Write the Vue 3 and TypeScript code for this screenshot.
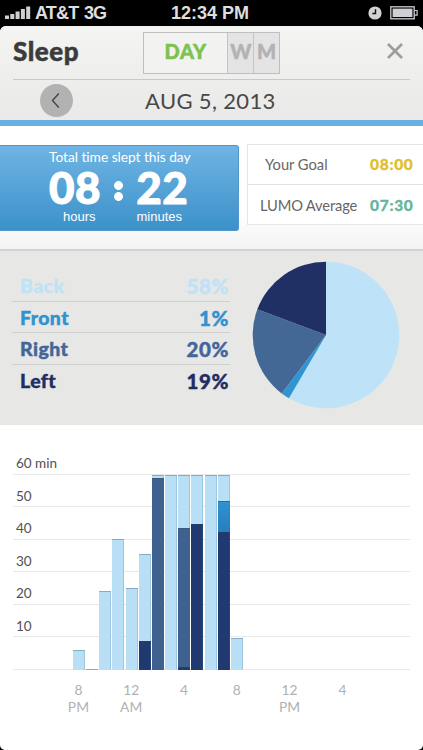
<script setup lang="ts">
import { ref } from 'vue'

interface Position {
  name: string
  percent: number
  from: number
  to: number
}

interface Segment {
  kind: string
  height: number
}

const period = ref('DAY')

const positions: Position[] = [
  { name: 'Back', percent: 58, from: 0, to: 210.4 },
  { name: 'Front', percent: 1, from: 210.4, to: 217.2 },
  { name: 'Right', percent: 20, from: 217.2, to: 290.5 },
  { name: 'Left', percent: 19, from: 290.5, to: 360 }
]

// one entry per hour, segments listed from the top down, heights in px
const hours: Segment[][] = [
  [{ kind: 'back', height: 20 }],
  [{ kind: 'back', height: 1 }],
  [{ kind: 'back', height: 79 }],
  [{ kind: 'back', height: 131 }],
  [{ kind: 'back', height: 82 }],
  [{ kind: 'back', height: 87 }, { kind: 'left', height: 29 }],
  [{ kind: 'back', height: 3 }, { kind: 'right', height: 192 }],
  [{ kind: 'back', height: 195 }],
  [{ kind: 'back', height: 53 }, { kind: 'right', height: 139 }, { kind: 'left', height: 3 }],
  [{ kind: 'back', height: 49 }, { kind: 'left', height: 146 }],
  [{ kind: 'back', height: 195 }],
  [{ kind: 'back', height: 26 }, { kind: 'front', height: 31 }, { kind: 'left', height: 138 }],
  [{ kind: 'back', height: 32 }]
]

const scale = ['60 min', '50', '40', '30', '20', '10']

const ticks = [
  { hour: '8', half: 'PM' },
  { hour: '12', half: 'AM' },
  { hour: '4', half: '' },
  { hour: '8', half: '' },
  { hour: '12', half: 'PM' },
  { hour: '4', half: '' }
]

function point (deg: number) {
  const a = deg * Math.PI / 180
  return `${74 + 73.3 * Math.sin(a)} ${74 - 73.3 * Math.cos(a)}`
}

function slice (p: Position) {
  const large = p.to - p.from > 180 ? 1 : 0
  return `M74 74 L${point(p.from)} A73.3 73.3 0 ${large} 1 ${point(p.to)} Z`
}
</script>

<template>
  <div class="phone">
    <div class="status">
      <svg class="signal" width="26" height="14" viewBox="0 0 26 14">
        <path d="M0 9.500h4V13H0zM5.300 8h4v5h-4zM10.600 5.500h4V13h-4zM15.900 3h4v10h-4zM21.200 0.500h4V13h-4z" fill="#d0d0d0" />
      </svg>
      <span class="carrier">AT&amp;T</span>
      <span class="network">3G</span>
      <span class="clock">12:34 PM</span>
      <svg class="alarm" width="14" height="14" viewBox="0 0 14 14">
        <circle cx="7" cy="7" r="6.600" fill="#d2d2d2" />
        <path d="M7.500 3.300V7.500H4.300" fill="none" stroke="#111" stroke-width="1.400" />
      </svg>
      <svg class="battery" width="28" height="14" viewBox="0 0 28 14">
        <rect x="0.800" y="0.800" width="23.400" height="12" fill="none" stroke="#cfcfcf" stroke-width="1.300" />
        <rect x="2.600" y="2.600" width="19.800" height="8.400" fill="#d2cfd4" />
        <path d="M24.500 4.500h2.600v4.600h-2.600" fill="none" stroke="#cfcfcf" stroke-width="1.200" />
      </svg>
    </div>

    <div class="screen">
      <header>
        <div class="title-row">
          <h1>Sleep</h1>
          <div class="tabs">
            <button class="day" :class="{ active: period === 'DAY' }" @click="period = 'DAY'">DAY</button>
            <button :class="{ active: period === 'W' }" @click="period = 'W'">W</button>
            <button :class="{ active: period === 'M' }" @click="period = 'M'">M</button>
          </div>
          <svg class="close" width="18" height="18" viewBox="0 0 18 18">
            <path d="M2 2L16 16M16 2L2 16" stroke="#9d9d9d" stroke-width="2.700" />
          </svg>
        </div>
        <div class="date-row">
          <button class="prev">
            <svg width="33" height="33" viewBox="0 0 33 33">
              <path d="M18.800 9.500L12.500 16.500L18.800 23.500" fill="none" stroke="#444" stroke-width="1.400" />
            </svg>
          </button>
          <span class="date">AUG 5, 2013</span>
        </div>
      </header>

      <section class="summary">
        <div class="total">
          <div class="caption">Total time slept this day</div>
          <div class="time"><span>08</span><i class="colon"></i><span>22</span></div>
          <div class="units"><span>hours</span><span>minutes</span></div>
        </div>
        <div class="compare">
          <div class="row"><span class="goal-label">Your Goal</span><b class="goal">08:00</b></div>
          <div class="row"><span class="average-label">LUMO Average</span><b class="average">07:30</b></div>
        </div>
      </section>

      <section class="positions">
        <div class="list">
          <div v-for="p in positions" :key="p.name" class="position" :class="p.name.toLowerCase()">
            <span>{{ p.name }}</span>
            <span class="percent">{{ p.percent }}%</span>
          </div>
        </div>
        <svg class="pie" width="148" height="148" viewBox="0 0 148 148">
          <path v-for="p in positions" :key="p.name" :d="slice(p)" :class="p.name.toLowerCase()" />
        </svg>
      </section>

      <section class="chart">
        <div class="plot">
          <div class="scale">
            <div v-for="s in scale" :key="s">{{ s }}</div>
            <div></div>
          </div>
          <div class="bars">
            <div v-for="(segments, i) in hours" :key="i" class="bar">
              <div
                v-for="s in segments"
                :key="s.kind"
                class="segment"
                :class="s.kind"
                :style="{ height: s.height + 'px' }"
              ></div>
            </div>
          </div>
        </div>
        <div class="ticks">
          <div v-for="(t, i) in ticks" :key="i">{{ t.hour }}<br />{{ t.half }}</div>
        </div>
      </section>
    </div>
  </div>
</template>

<style>
body {
  margin: 0;
  background: #000;
}
</style>

<style scoped>
.phone {
  width: 423px;
  height: 750px;
  background: #000;
  font-family: Lato, "Liberation Sans", sans-serif;
  font-variant-ligatures: none;
  overflow: hidden;
}

.phone * {
  box-sizing: border-box;
}

button {
  padding: 0;
  border: 0;
  font-family: inherit;
}

.status {
  display: flex;
  align-items: center;
  height: 26px;
  color: #dedede;
  font: bold 18px/26px "Liberation Sans", sans-serif;
  white-space: nowrap;
}

.signal {
  margin-left: 5px;
}

.carrier {
  width: 49px;
  margin-left: 4px;
  letter-spacing: -0.8px;
}

.network {
  width: 30px;
  letter-spacing: -1px;
}

.clock {
  width: 82px;
  margin-left: 57px;
}

.alarm {
  margin-left: 115px;
}

.battery {
  margin-left: 8px;
}

.screen {
  height: 724px;
  background: #fff;
  border-radius: 6px 6px 5px 5px;
  overflow: hidden;
}

header {
  height: 100px;
  padding: 0 13px;
  background: linear-gradient(#f4f4f2, #e9e9e8);
  border-bottom: 6px solid #6aafdf;
}

.title-row {
  display: flex;
  align-items: center;
  height: 54px;
  border-bottom: 1px solid #c9c9c8;
}

h1 {
  width: 130px;
  margin: 0;
  padding-bottom: 4px;
  color: #3b3b3b;
  font-size: 26px;
  font-weight: 900;
  letter-spacing: 0.5px;
  line-height: 46px;
  -webkit-text-stroke: 0.5px;
}

.tabs {
  display: flex;
  width: 137px;
  height: 42px;
  border: 1px solid #bfbfbf;
}

.tabs button {
  width: 26px;
  background: #e4e4e4;
  border-left: 1px solid #c4c4c4;
  color: #b3b3b3;
  font-size: 20px;
  font-weight: 900;
  line-height: 36px;
  padding-bottom: 4px;
  -webkit-text-stroke: 0.5px;
}

.tabs .day {
  width: 84px;
  border-left: 0;
  letter-spacing: 0.6px;
}

.tabs .active {
  background: #f2f2f1;
  color: #7cc24f;
}

.close {
  margin-left: 106px;
  margin-bottom: 4px;
}

.date-row {
  display: flex;
  align-items: center;
  height: 41px;
}

.prev {
  width: 33px;
  height: 33px;
  margin-left: 27px;
  border-radius: 50%;
  background: #b2b2b2;
}

.date {
  margin-left: 72px;
  color: #484848;
  font-size: 22px;
  letter-spacing: 0.35px;
  white-space: nowrap;
}

.summary {
  display: flex;
  justify-content: space-between;
  height: 125px;
  padding-top: 18px;
  background: linear-gradient(#fff 70%, #f3f3f3);
  border-bottom: 2px solid #d2d2d1;
}

.total {
  width: 239px;
  height: 86px;
  margin-top: 1px;
  padding-left: 49px;
  border: 1px solid #4f97cb;
  border-left: 0;
  border-radius: 0 3px 3px 0;
  background: linear-gradient(#6fb4e4, #3c91ca);
  color: #fff;
  white-space: nowrap;
}

.caption {
  height: 22px;
  font-size: 13.800px;
  letter-spacing: -0.05px;
  line-height: 22px;
}

.time {
  display: flex;
  height: 39px;
  font-size: 44px;
  font-weight: 900;
  letter-spacing: 0.6px;
  line-height: 38px;
  -webkit-text-stroke: 1px;
}

.colon {
  width: 9px;
  height: 20px;
  margin: 13px 13px 0 13px;
  background:
    radial-gradient(circle, #fff 4px, transparent 4.800px) 0 0 / 9px 9px no-repeat,
    radial-gradient(circle, #fff 4px, transparent 4.800px) 0 11px / 9px 9px no-repeat;
}

.units {
  display: flex;
  gap: 41px;
  padding-left: 14px;
  font: 13px/19px "Liberation Sans", sans-serif;
}

.compare {
  width: 176px;
  height: 81px;
  border: 1px solid #e6e6e6;
  border-right: 0;
  background: #fff;
}

.row {
  display: flex;
  justify-content: flex-end;
  align-items: center;
  height: 39px;
  padding-right: 8px;
  color: #666;
  font-size: 14.700px;
  line-height: 39px;
  white-space: nowrap;
}

.row + .row {
  height: 41px;
  border-top: 1px solid #e2e2e2;
}

.row b {
  width: 45px;
  font-size: 15.500px;
  font-weight: 900;
  letter-spacing: 0.7px;
  -webkit-text-stroke: 0.3px;
}

.goal-label {
  width: 105px;
}

.average-label {
  width: 110px;
  letter-spacing: -0.15px;
}

.goal {
  color: #dfc02c;
}

.average {
  color: #67b59c;
}

.positions {
  display: flex;
  height: 174px;
  background: #e7e7e6;
}

.list {
  width: 218px;
  margin: 19px 0 0 12px;
}

.position {
  display: flex;
  justify-content: space-between;
  height: 31.700px;
  padding: 0 1px 0 8px;
  border-bottom: 1px solid #cfcfcf;
  font-size: 19.500px;
  font-weight: 900;
  letter-spacing: 0.4px;
  line-height: 32px;
  -webkit-text-stroke: 0.4px;
}

.position:last-child {
  border-bottom: 0;
}

.position .percent {
  font-size: 20.500px;
  letter-spacing: 0.6px;
}

.position.back {
  color: #bfe2f7;
}

.position.front {
  color: #3192ce;
}

.position.right {
  color: #43669a;
}

.position.left {
  color: #1e2e63;
}

.pie {
  margin: 10px 0 0 22px;
}

.pie .back {
  fill: #bee3f9;
}

.pie .front {
  fill: #3096d3;
}

.pie .right {
  fill: #446896;
}

.pie .left {
  fill: #203064;
}

.chart {
  padding: 17px 13px 0;
}

/* scale lines and bars share one grid cell */
.plot {
  display: grid;
  width: 397px;
  height: 228px;
}

.scale,
.bars {
  grid-area: 1 / 1;
}

.scale div {
  height: 32.550px;
  padding: 5px 0 0 3px;
  border-bottom: 1px solid #e9e9e9;
  color: #505050;
  font-size: 13.500px;
  line-height: 32px;
}

.bars {
  display: flex;
  align-items: flex-end;
  gap: 1.200px;
  padding-left: 59.800px;
}

.bar {
  width: 12px;
}

.segment {
  border-top: 1px solid rgba(50, 75, 95, 0.350);
  box-shadow: inset -1px 0 rgba(60, 110, 150, 0.220);
}

.segment.back {
  background: #b9dff6;
}

.segment.front {
  background: linear-gradient(#3092cf, #2580bd);
}

.segment.right {
  background: #3f6190;
}

.segment.left {
  background: #203970;
}

.ticks {
  display: grid;
  grid-template-columns: repeat(6, 52.800px);
  margin: 11px 0 0 39px;
  color: #b1b1b1;
  font-size: 13.800px;
  line-height: 17px;
  text-align: center;
}
</style>
